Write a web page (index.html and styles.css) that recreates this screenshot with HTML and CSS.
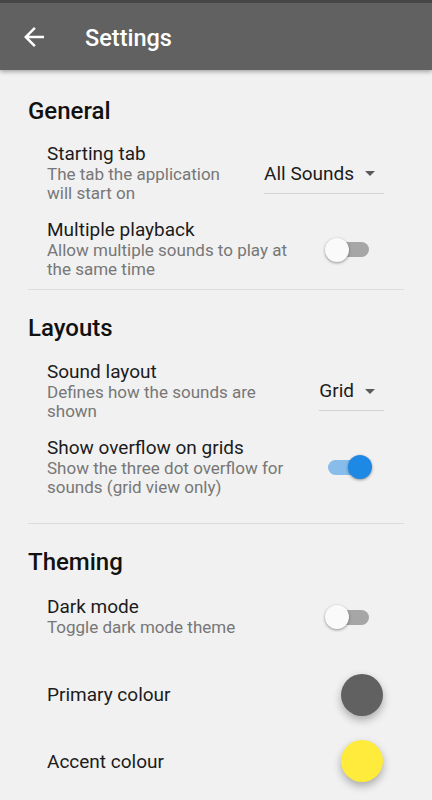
FILE: index.html
```html
<!DOCTYPE html>
<html lang="en">
<head>
    <meta charset="UTF-8">
    <meta name="viewport" content="width=device-width, initial-scale=1.0">
    <title>Settings</title>
    <link rel="stylesheet" href="styles.css">
</head>
<body>
    <header class="app-bar">
        <svg class="back-icon" viewBox="0 0 24 24" width="30" height="30">
            <path d="M20 11H7.83l5.59-5.59L12 4l-8 8 8 8 1.41-1.41L7.83 13H20v-2z" fill="#ffffff"/>
        </svg>
        <h1>Settings</h1>
    </header>

    <main class="settings">
        <section class="group">
            <h2>General</h2>
            <div class="row">
                <div class="row-text">
                    <div class="row-title">Starting tab</div>
                    <div class="row-sub">The tab the application will start on</div>
                </div>
                <div class="select">All Sounds <span class="caret"></span></div>
            </div>
            <div class="row">
                <div class="row-text">
                    <div class="row-title">Multiple playback</div>
                    <div class="row-sub">Allow multiple sounds to play at the same time</div>
                </div>
                <div class="switch"><span class="track"></span><span class="thumb"></span></div>
            </div>
        </section>

        <section class="group group-layouts">
            <h2>Layouts</h2>
            <div class="row">
                <div class="row-text">
                    <div class="row-title">Sound layout</div>
                    <div class="row-sub">Defines how the sounds are shown</div>
                </div>
                <div class="select">Grid <span class="caret"></span></div>
            </div>
            <div class="row">
                <div class="row-text">
                    <div class="row-title">Show overflow on grids</div>
                    <div class="row-sub">Show the three dot overflow for sounds (grid view only)</div>
                </div>
                <div class="switch on"><span class="track"></span><span class="thumb"></span></div>
            </div>
        </section>

        <section class="group group-last">
            <h2>Theming</h2>
            <div class="row row-short">
                <div class="row-text">
                    <div class="row-title">Dark mode</div>
                    <div class="row-sub">Toggle dark mode theme</div>
                </div>
                <div class="switch"><span class="track"></span><span class="thumb"></span></div>
            </div>
            <div class="colour-rows">
                <div class="row row-colour">
                    <div class="row-title">Primary colour</div>
                    <span class="swatch primary"></span>
                </div>
                <div class="row row-colour">
                    <div class="row-title">Accent colour</div>
                    <span class="swatch accent"></span>
                </div>
            </div>
        </section>
    </main>
</body>
</html>
```

FILE: styles.css
```css
/* Settings screen */
body {
    font-family: Roboto, "Noto Sans", Arial, sans-serif;
    background-color: #f1f1f1;
    margin: 0;
    padding: 0;
    height: 800px;
    overflow: hidden;
}

.app-bar {
    position: relative;
    z-index: 1;
    height: 67px;
    border-top: 3px solid #464646;
    background-color: #616161;
    display: flex;
    align-items: center;
    padding-left: 19px;
    gap: 36px;
    box-shadow: 0px 2px 4px rgba(0, 0, 0, 0.3);
}

.app-bar h1 {
    margin: 0;
    color: #ffffff;
    font-size: 23.5px;
    font-weight: 500;
    line-height: 28px;
    padding-top: 3px;
}

.group {
    margin: 0 28px;
    padding-top: 26.5px;
    border-bottom: 1px solid #dcdcdc;
}

.group + .group {
    padding-top: 24px;
}

.group-layouts {
    padding-bottom: 16px;
}

.group-last {
    border-bottom: none;
}

.group h2 {
    margin: 0 0 12.5px 0;
    font-size: 24px;
    font-weight: 500;
    line-height: 28px;
    color: #111111;
}

.row {
    display: flex;
    align-items: center;
    justify-content: space-between;
    gap: 24px;
    padding: 5px 20px 10px 19px;
}

.row-short {
    padding-top: 7px;
    padding-bottom: 8px;
}

.row-text {
    flex: 1;
}

.row-title {
    font-size: 19px;
    line-height: 23px;
    color: #1c1c1c;
}

.row-sub {
    font-size: 17px;
    line-height: 19px;
    color: #777777;
}

.select {
    flex-shrink: 0;
    display: flex;
    align-items: center;
    gap: 11px;
    margin-top: 5px;
    font-size: 19px;
    line-height: 22px;
    color: #1c1c1c;
    padding: 6px 9px 8px 0;
    border-bottom: 1px solid #d2d2d2;
}

.caret {
    width: 0;
    height: 0;
    border-left: 5px solid transparent;
    border-right: 5px solid transparent;
    border-top: 5px solid #5a5a5a;
}

.switch {
    flex-shrink: 0;
    position: relative;
    width: 47px;
    height: 24px;
    margin-top: 2px;
    margin-right: 12px;
}

.switch .track {
    position: absolute;
    left: 3px;
    top: 4.5px;
    width: 41px;
    height: 15px;
    border-radius: 8px;
    background-color: #a6a6a6;
}

.switch .thumb {
    position: absolute;
    left: 0;
    top: 0;
    width: 24px;
    height: 24px;
    border-radius: 50%;
    background-color: #fafafa;
    box-shadow: 0px 1px 3px rgba(0, 0, 0, 0.4);
}

.switch.on .track {
    background-color: rgba(30, 136, 229, 0.5);
}

.switch.on .thumb {
    left: 23px;
    background-color: #1e88e5;
}

.colour-rows {
    margin-top: 16.5px;
}

.row-colour {
    padding-top: 12px;
    padding-bottom: 12.5px;
}

.swatch {
    width: 42px;
    height: 42px;
    border-radius: 50%;
    margin-right: 1px;
    box-shadow: 0px 4px 8px rgba(0, 0, 0, 0.3);
}

.swatch.primary {
    background-color: #616161;
}

.swatch.accent {
    background-color: #ffeb3b;
}
```
